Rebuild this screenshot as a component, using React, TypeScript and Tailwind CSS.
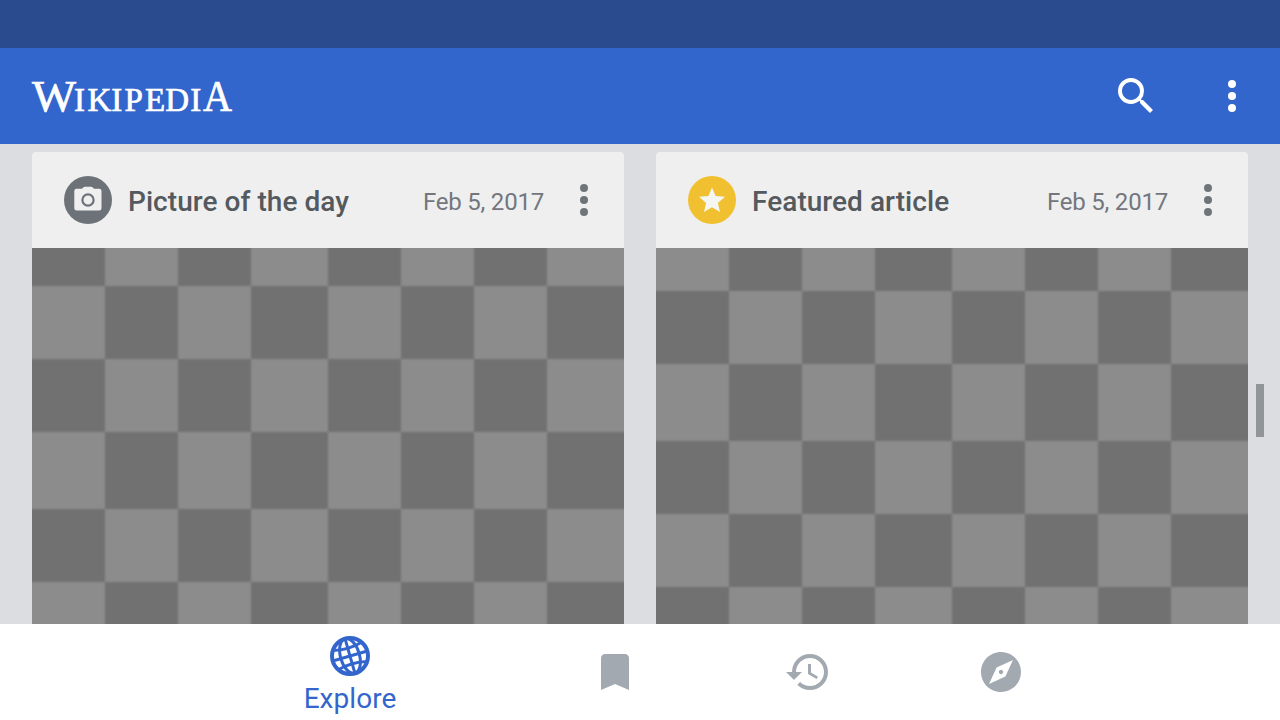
import type { ReactNode } from "react";

function Dots() {
  return (
    <svg viewBox="0 0 48 48" className="size-12 shrink-0 fill-current">
      <circle cx="24" cy="12" r="4" />
      <circle cx="24" cy="24" r="4" />
      <circle cx="24" cy="36" r="4" />
    </svg>
  );
}

// The grid runs 4px past every side so that its softened outer edge is clipped away.
function Checker({ rows, lightFirst }: { rows: string; lightFirst: boolean }) {
  const cells = [];
  for (let r = 0; r < 6; r++) {
    for (let c = 0; c < 8; c++) {
      const light = (r + c) % 2 === (lightFirst ? 0 : 1);
      cells.push(<div key={`${r}-${c}`} className={light ? "bg-[#8c8c8c]" : "bg-[#717171]"} />);
    }
  }
  return (
    <div className="h-[376px] overflow-hidden">
      <div
        className={`-m-1 grid h-[384px] grid-cols-[77px_73px_73px_77px_73px_73px_73px_81px] blur-[0.9px] ${rows}`}
      >
        {cells}
      </div>
    </div>
  );
}

function Card({ title, icon, color, children }: { title: string; icon: ReactNode; color: string; children: ReactNode }) {
  return (
    <section className="flex w-[592px] flex-col overflow-hidden rounded-t">
      <header className="flex h-24 shrink-0 items-center bg-[#efefef] pl-8 pr-4">
        <div className={`size-12 shrink-0 rounded-full ${color}`}>{icon}</div>
        <h2 className="ml-4 flex-1 whitespace-nowrap pt-1 text-[28px] leading-8 font-medium tracking-[0.05px] text-[#54595d]">{title}</h2>
        <span className="mr-4 whitespace-nowrap pt-1 text-2xl tracking-[-0.2px] text-[#72777d]">Feb 5, 2017</span>
        <div className="text-[#6f7479]">
          <Dots />
        </div>
      </header>
      {children}
    </section>
  );
}

function NavIcon({ children }: { children: ReactNode }) {
  return (
    <button className="flex w-[193px] items-center justify-center">
      <svg viewBox="0 0 24 24" className="size-12 fill-[#a2a9b1]">
        {children}
      </svg>
    </button>
  );
}

export default function App() {
  return (
    <div className="flex h-[720px] w-[1280px] flex-col overflow-hidden bg-[#dcdde1] font-['Roboto',sans-serif]">
      <div className="h-12 shrink-0 bg-[#2a4b8d]" />
      <header className="flex h-24 shrink-0 items-center bg-[#3366cc] pr-6 pl-8 text-white">
        <svg width="204" height="40" viewBox="0 0 204 40" className="overflow-visible fill-white stroke-white font-['Liberation_Serif',serif]" strokeWidth="0.7">
          <text y="34.5" x="0" fontSize="45" textLength="44" lengthAdjust="spacingAndGlyphs">W</text>
          <text y="34.5" x="42 55.5 79.3 92.5 113 133.2 158.3" fontSize="33">IKIPEDI</text>
          <text y="34.5" x="171" fontSize="44" textLength="29" lengthAdjust="spacingAndGlyphs">A</text>
        </svg>
        <div className="flex-1" />
        <svg viewBox="0 0 24 24" className="mr-12 size-12 fill-white">
          <path d="M15.5 14h-.79l-.28-.27A6.471 6.471 0 0 0 16 9.5 6.5 6.5 0 1 0 9.5 16c1.61 0 3.09-.59 4.23-1.57l.27.28v.79l5 4.99L20.49 19l-4.99-5zm-6 0C7.01 14 5 11.99 5 9.5S7.01 5 9.5 5 14 7.01 14 9.5 11.99 14 9.5 14z" />
        </svg>
        <Dots />
      </header>
      <main className="relative flex flex-1 gap-8 px-8 pt-2">
        <Card
          title="Picture of the day"
          color="bg-[#6c7278]"
          icon={
            <svg viewBox="0 0 48 48" className="size-12">
              <path d="M18 12.8 19.5 11.2Q20 10.8 20.8 10.8h6.4q.8 0 1.3.4L30 12.8h5.2q2.3 0 2.3 2.3v17.2q0 2.3-2.3 2.3H12.6q-2.3 0-2.3-2.3V15.1q0-2.3 2.3-2.3z" className="fill-[#efefef]" />
              <circle cx="24" cy="24" r="5.6" className="fill-none stroke-[#6c7278]" strokeWidth="2.2" />
            </svg>
          }
        >
          <Checker lightFirst={false} rows="grid-rows-[42px_73px_73px_77px_73px_46px]" />
        </Card>
        <Card
          title="Featured article"
          color="bg-[#f0c030]"
          icon={
            <svg viewBox="0 0 48 48" className="size-12">
              <path transform="translate(8.4 8.8) scale(1.3)" d="M12 17.27 18.18 21l-1.64-7.03L22 9.24l-7.19-.61L12 2 9.19 8.63 2 9.24l5.46 4.73L5.82 21z" className="fill-[#f5f5f2]" />
            </svg>
          }
        >
          <Checker lightFirst={true} rows="grid-rows-[47px_73px_77px_73px_73px_41px]" />
        </Card>
        <div className="absolute top-60 right-4 h-[53px] w-2 bg-[#929598]" />
      </main>
      <nav className="flex h-24 shrink-0 bg-white pl-[182px]">
        <button className="flex w-[336px] flex-col items-center pt-3 text-[#3366cc]">
          <svg viewBox="-20 -20 40 40" className="size-10 fill-none stroke-current">
            <circle r="18" strokeWidth="4" />
            <g transform="rotate(-16)" strokeWidth="3">
              <path d="M0-18V18M-18 0H18" />
              <ellipse rx="9.5" ry="18" />
              <path d="M-15-10Q0-6 15-10M-15 10Q0 6 15 10" />
            </g>
          </svg>
          <span className="mt-[7px] text-[28px] leading-8 tracking-[0.05px]">Explore</span>
        </button>
        <NavIcon>
          <path d="M17 3H7c-1.1 0-1.99.9-1.99 2L5 21l7-3 7 3V5c0-1.1-.9-2-2-2z" />
        </NavIcon>
        <NavIcon>
          <path d="M13 3a9 9 0 0 0-9 9H1l3.89 3.89.07.14L9 12H6c0-3.87 3.13-7 7-7s7 3.13 7 7-3.13 7-7 7c-1.93 0-3.68-.79-4.94-2.06l-1.42 1.42A8.954 8.954 0 0 0 13 21a9 9 0 0 0 0-18zm-1 5v5l4.28 2.54.72-1.21-3.5-2.08V8H12z" />
        </NavIcon>
        <NavIcon>
          <path d="M12 10.9c-.61 0-1.1.49-1.1 1.1s.49 1.1 1.1 1.1c.61 0 1.1-.49 1.1-1.1s-.49-1.1-1.1-1.1zM12 2C6.48 2 2 6.48 2 12s4.48 10 10 10 10-4.48 10-10S17.52 2 12 2zm2.19 12.19L6 18l3.81-8.19L18 6l-3.81 8.19z" />
        </NavIcon>
      </nav>
    </div>
  );
}
